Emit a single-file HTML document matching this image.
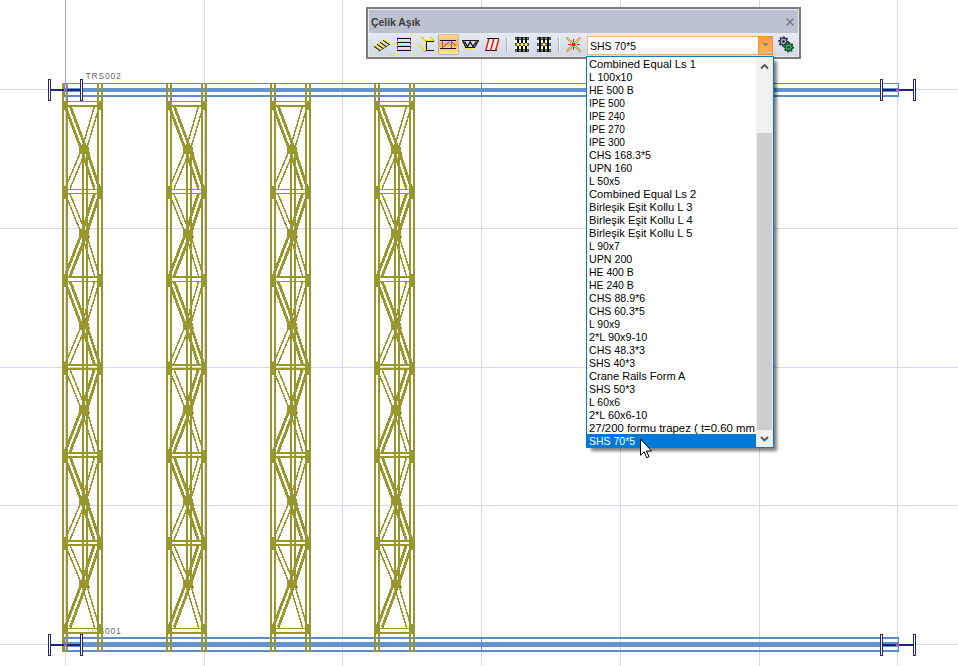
<!DOCTYPE html>
<html><head><meta charset="utf-8"><title>Çelik Aşık</title>
<style>
html,body{margin:0;padding:0;background:#fff;}
body{width:958px;height:666px;overflow:hidden;position:relative;font-family:"Liberation Sans",sans-serif;}
#cv{position:absolute;left:0;top:0;}
#cv text{font-family:"Liberation Sans",sans-serif;}
#panel{position:absolute;left:366px;top:7px;width:431px;height:48px;border:2px solid #7c7c7c;background:#bcc2cf;}
#panel .in{position:absolute;left:0;top:0;right:0;bottom:0;border:1px solid #e4e8f0;}
#title{position:absolute;left:0;top:0;right:0;height:23px;background:#bcc2cf;}
#title span{position:absolute;left:2px;top:6px;font-weight:bold;font-size:11px;color:#3c3c3c;white-space:nowrap;transform-origin:0 0;transform:scaleX(0.945);}
#tb{position:absolute;left:0;top:23px;right:0;bottom:0;background:linear-gradient(#e6eaf2,#d3d9e5);}
#sel{position:absolute;left:438px;top:34px;width:19px;height:19px;border:1px solid;border-color:#dcc09a #c9b493 #aab2bf #a4aebd;border-radius:2px;background:linear-gradient(#ffd898 0%,#ffb54c 45%,#ffb54c 55%,#ffe9a4 100%);}
.sep{position:absolute;top:38px;width:1px;height:13px;background:#a9afbb;border-right:1px solid #f4f6fa;}
#combo{position:absolute;left:587px;top:36px;width:184px;height:17px;border:1px solid #f7b673;background:#fff;}
#combo span{position:absolute;left:2.4px;top:3px;font-size:11px;color:#000;white-space:nowrap;transform-origin:0 0;transform:scaleX(0.9542);}
#cbtn{position:absolute;left:758px;top:36px;width:13px;height:17px;border:1px solid #f78f30;background:linear-gradient(#ff9a3c,#ffb466);}
#list{position:absolute;left:586px;top:56px;width:186px;height:390px;border:1px solid #0078d7;background:#fff;box-shadow:4px 4px 3px -1px rgba(0,0,0,.5);}
#items{position:absolute;left:0;top:0;width:169px;height:390px;overflow:hidden;}
#items div{height:13px;line-height:13px;font-size:11px;color:#000;white-space:nowrap;padding-left:2.4px;position:relative;}
#items div span{display:inline-block;transform-origin:0 0;position:relative;top:1px;}
#items div.sel{background:#0078d7;color:#fff;}
#sb{position:absolute;left:169px;top:0;width:17px;height:390px;background:#f0f0f0;}
#thumb{position:absolute;left:1px;top:76px;width:15px;height:297px;background:#cdcdcd;}
</style></head><body>
<svg id="cv" width="958" height="666" viewBox="0 0 958 666" shape-rendering="crispEdges">
<rect x="204" y="0" width="1" height="666" fill="#d6d6ec"/><rect x="342" y="0" width="1" height="666" fill="#d6d6ec"/><rect x="481" y="0" width="1" height="666" fill="#d6d6ec"/><rect x="620" y="0" width="1" height="666" fill="#d6d6ec"/><rect x="759" y="0" width="1" height="666" fill="#d6d6ec"/><rect x="897" y="0" width="1" height="666" fill="#d6d6ec"/><rect x="65" y="0" width="1" height="666" fill="#d6d6ec"/><rect x="65" y="0" width="1" height="83" fill="#ababab"/><rect x="916" y="644" width="42" height="1" fill="#a6a6a6"/><rect x="0" y="89" width="958" height="1" fill="#d6d6ec"/><rect x="0" y="228" width="958" height="1" fill="#d6d6ec"/><rect x="0" y="367" width="958" height="1" fill="#d6d6ec"/><rect x="0" y="505" width="958" height="1" fill="#d6d6ec"/><rect x="0" y="644" width="958" height="1" fill="#d6d6ec"/><rect x="64" y="83" width="835" height="1" fill="#5a8ccc"/><rect x="64" y="88" width="835" height="4" fill="#6494d0"/><rect x="64" y="95" width="835" height="2" fill="#5a8ccc"/><rect x="64" y="637" width="835" height="2" fill="#5a8ccc"/><rect x="64" y="642" width="835" height="5" fill="#6494d0"/><rect x="64" y="650" width="835" height="2" fill="#5a8ccc"/><rect x="898" y="83" width="1" height="14" fill="#5a8ccc"/><rect x="64" y="83" width="1" height="14" fill="#5a8ccc"/><rect x="481" y="83" width="1" height="14" fill="#5a8ccc"/><rect x="481" y="637" width="1" height="15" fill="#5a8ccc"/><rect x="64" y="637" width="1" height="15" fill="#5a8ccc"/><rect x="898" y="637" width="1" height="15" fill="#5a8ccc"/><text x="85.6" y="79" font-size="8.5" letter-spacing="0.8" fill="#666" style="shape-rendering:auto">TRS002</text><text x="85.6" y="634" font-size="8.5" letter-spacing="0.8" fill="#666">TRS001</text><rect x="85" y="626" width="12.5" height="10" fill="#fff" opacity="0.62"/><clipPath id="cc62"><rect x="62" y="100" width="41" height="540"/></clipPath><g fill="#97972e"><rect x="62" y="83" width="2" height="569"/><rect x="66" y="83" width="2" height="569"/><rect x="97" y="83" width="2" height="569"/><rect x="101" y="83" width="2" height="569"/><rect x="62" y="83" width="6" height="1"/><rect x="62" y="651" width="6" height="1"/><rect x="97" y="83" width="6" height="1"/><rect x="97" y="651" width="6" height="1"/><rect x="62" y="101" width="41" height="1"/><rect x="62" y="105" width="41" height="2"/><rect x="62" y="189" width="41" height="1"/><rect x="62" y="193" width="41" height="1"/><rect x="62" y="276" width="41" height="2"/><rect x="62" y="281" width="41" height="1"/><rect x="62" y="364" width="41" height="2"/><rect x="62" y="368" width="41" height="2"/><rect x="62" y="452" width="41" height="2"/><rect x="62" y="456" width="41" height="2"/><rect x="62" y="540" width="41" height="2"/><rect x="62" y="544" width="41" height="2"/><rect x="62" y="628" width="41" height="1"/><rect x="62" y="632" width="41" height="2"/><rect x="82" y="150" width="2" height="437"/><rect x="86" y="150" width="2" height="437"/><rect x="64" y="102" width="2" height="8"/><rect x="99" y="102" width="2" height="8"/><rect x="64" y="186" width="2" height="13"/><rect x="99" y="186" width="2" height="13"/><rect x="64" y="274" width="2" height="13"/><rect x="99" y="274" width="2" height="13"/><rect x="64" y="362" width="2" height="13"/><rect x="99" y="362" width="2" height="13"/><rect x="64" y="450" width="2" height="13"/><rect x="99" y="450" width="2" height="13"/><rect x="64" y="537" width="2" height="13"/><rect x="99" y="537" width="2" height="13"/><rect x="64" y="624" width="2" height="9"/><rect x="99" y="624" width="2" height="9"/><polygon points="78.5,145.2 88.0,145.2 89.0,149.7 90.0,153.7 79.5,153.7 79.0,149.7"/><polygon points="78.5,229.5 88.0,229.5 89.0,234.0 90.0,238.0 79.5,238.0 79.0,234.0"/><polygon points="78.5,320.8 88.0,320.8 89.0,325.3 90.0,329.3 79.5,329.3 79.0,325.3"/><polygon points="78.5,405.1 88.0,405.1 89.0,409.6 90.0,413.6 79.5,413.6 79.0,409.6"/><polygon points="78.5,496.4 88.0,496.4 89.0,500.9 90.0,504.9 79.5,504.9 79.0,500.9"/><polygon points="78.5,579.5 88.0,579.5 89.0,584.0 90.0,588.0 79.5,588.0 79.0,584.0"/><g stroke="#97972e" clip-path="url(#cc62)"><line x1="64.90" y1="105.80" x2="81.40" y2="149.70" stroke-width="2.8"/><line x1="70.10" y1="105.80" x2="86.60" y2="149.70" stroke-width="2.8"/><line x1="94.60" y1="105.80" x2="81.60" y2="149.70" stroke-width="1.5"/><line x1="99.40" y1="105.80" x2="86.40" y2="149.70" stroke-width="1.5"/><line x1="65.10" y1="188.60" x2="81.60" y2="149.70" stroke-width="1.5"/><line x1="69.90" y1="188.60" x2="86.40" y2="149.70" stroke-width="1.5"/><line x1="94.40" y1="188.60" x2="81.40" y2="149.70" stroke-width="2.8"/><line x1="99.60" y1="188.60" x2="86.60" y2="149.70" stroke-width="2.8"/><line x1="65.10" y1="193.60" x2="81.60" y2="234.00" stroke-width="1.5"/><line x1="69.90" y1="193.60" x2="86.40" y2="234.00" stroke-width="1.5"/><line x1="94.40" y1="193.60" x2="81.40" y2="234.00" stroke-width="2.8"/><line x1="99.60" y1="193.60" x2="86.60" y2="234.00" stroke-width="2.8"/><line x1="64.90" y1="276.40" x2="81.40" y2="234.00" stroke-width="2.8"/><line x1="70.10" y1="276.40" x2="86.60" y2="234.00" stroke-width="2.8"/><line x1="94.60" y1="276.40" x2="81.60" y2="234.00" stroke-width="1.5"/><line x1="99.40" y1="276.40" x2="86.40" y2="234.00" stroke-width="1.5"/><line x1="64.90" y1="281.40" x2="81.40" y2="325.30" stroke-width="2.8"/><line x1="70.10" y1="281.40" x2="86.60" y2="325.30" stroke-width="2.8"/><line x1="94.60" y1="281.40" x2="81.60" y2="325.30" stroke-width="1.5"/><line x1="99.40" y1="281.40" x2="86.40" y2="325.30" stroke-width="1.5"/><line x1="65.10" y1="364.20" x2="81.60" y2="325.30" stroke-width="1.5"/><line x1="69.90" y1="364.20" x2="86.40" y2="325.30" stroke-width="1.5"/><line x1="94.40" y1="364.20" x2="81.40" y2="325.30" stroke-width="2.8"/><line x1="99.60" y1="364.20" x2="86.60" y2="325.30" stroke-width="2.8"/><line x1="65.10" y1="369.20" x2="81.60" y2="409.60" stroke-width="1.5"/><line x1="69.90" y1="369.20" x2="86.40" y2="409.60" stroke-width="1.5"/><line x1="94.40" y1="369.20" x2="81.40" y2="409.60" stroke-width="2.8"/><line x1="99.60" y1="369.20" x2="86.60" y2="409.60" stroke-width="2.8"/><line x1="64.90" y1="452.00" x2="81.40" y2="409.60" stroke-width="2.8"/><line x1="70.10" y1="452.00" x2="86.60" y2="409.60" stroke-width="2.8"/><line x1="94.60" y1="452.00" x2="81.60" y2="409.60" stroke-width="1.5"/><line x1="99.40" y1="452.00" x2="86.40" y2="409.60" stroke-width="1.5"/><line x1="64.90" y1="457.00" x2="81.40" y2="500.90" stroke-width="2.8"/><line x1="70.10" y1="457.00" x2="86.60" y2="500.90" stroke-width="2.8"/><line x1="94.60" y1="457.00" x2="81.60" y2="500.90" stroke-width="1.5"/><line x1="99.40" y1="457.00" x2="86.40" y2="500.90" stroke-width="1.5"/><line x1="65.10" y1="539.80" x2="81.60" y2="500.90" stroke-width="1.5"/><line x1="69.90" y1="539.80" x2="86.40" y2="500.90" stroke-width="1.5"/><line x1="94.40" y1="539.80" x2="81.40" y2="500.90" stroke-width="2.8"/><line x1="99.60" y1="539.80" x2="86.60" y2="500.90" stroke-width="2.8"/><line x1="65.10" y1="544.80" x2="81.60" y2="584.00" stroke-width="1.5"/><line x1="69.90" y1="544.80" x2="86.40" y2="584.00" stroke-width="1.5"/><line x1="94.40" y1="544.80" x2="81.40" y2="584.00" stroke-width="2.8"/><line x1="99.60" y1="544.80" x2="86.60" y2="584.00" stroke-width="2.8"/><line x1="64.90" y1="627.60" x2="81.40" y2="584.00" stroke-width="2.8"/><line x1="70.10" y1="627.60" x2="86.60" y2="584.00" stroke-width="2.8"/><line x1="94.60" y1="627.60" x2="81.60" y2="584.00" stroke-width="1.5"/><line x1="99.40" y1="627.60" x2="86.40" y2="584.00" stroke-width="1.5"/></g></g><clipPath id="cc166"><rect x="166" y="100" width="41" height="540"/></clipPath><g fill="#97972e"><rect x="166" y="83" width="2" height="569"/><rect x="170" y="83" width="2" height="569"/><rect x="201" y="83" width="2" height="569"/><rect x="205" y="83" width="2" height="569"/><rect x="166" y="83" width="6" height="1"/><rect x="166" y="651" width="6" height="1"/><rect x="201" y="83" width="6" height="1"/><rect x="201" y="651" width="6" height="1"/><rect x="166" y="101" width="41" height="1"/><rect x="166" y="105" width="41" height="2"/><rect x="166" y="189" width="41" height="1"/><rect x="166" y="193" width="41" height="1"/><rect x="166" y="276" width="41" height="2"/><rect x="166" y="281" width="41" height="1"/><rect x="166" y="364" width="41" height="2"/><rect x="166" y="368" width="41" height="2"/><rect x="166" y="452" width="41" height="2"/><rect x="166" y="456" width="41" height="2"/><rect x="166" y="540" width="41" height="2"/><rect x="166" y="544" width="41" height="2"/><rect x="166" y="628" width="41" height="1"/><rect x="166" y="632" width="41" height="2"/><rect x="186" y="150" width="2" height="437"/><rect x="190" y="150" width="2" height="437"/><rect x="168" y="102" width="2" height="8"/><rect x="203" y="102" width="2" height="8"/><rect x="168" y="186" width="2" height="13"/><rect x="203" y="186" width="2" height="13"/><rect x="168" y="274" width="2" height="13"/><rect x="203" y="274" width="2" height="13"/><rect x="168" y="362" width="2" height="13"/><rect x="203" y="362" width="2" height="13"/><rect x="168" y="450" width="2" height="13"/><rect x="203" y="450" width="2" height="13"/><rect x="168" y="537" width="2" height="13"/><rect x="203" y="537" width="2" height="13"/><rect x="168" y="624" width="2" height="9"/><rect x="203" y="624" width="2" height="9"/><polygon points="182.5,145.2 192.0,145.2 193.0,149.7 194.0,153.7 183.5,153.7 183.0,149.7"/><polygon points="182.5,229.5 192.0,229.5 193.0,234.0 194.0,238.0 183.5,238.0 183.0,234.0"/><polygon points="182.5,320.8 192.0,320.8 193.0,325.3 194.0,329.3 183.5,329.3 183.0,325.3"/><polygon points="182.5,405.1 192.0,405.1 193.0,409.6 194.0,413.6 183.5,413.6 183.0,409.6"/><polygon points="182.5,496.4 192.0,496.4 193.0,500.9 194.0,504.9 183.5,504.9 183.0,500.9"/><polygon points="182.5,579.5 192.0,579.5 193.0,584.0 194.0,588.0 183.5,588.0 183.0,584.0"/><g stroke="#97972e" clip-path="url(#cc166)"><line x1="168.90" y1="105.80" x2="185.40" y2="149.70" stroke-width="2.8"/><line x1="174.10" y1="105.80" x2="190.60" y2="149.70" stroke-width="2.8"/><line x1="198.60" y1="105.80" x2="185.60" y2="149.70" stroke-width="1.5"/><line x1="203.40" y1="105.80" x2="190.40" y2="149.70" stroke-width="1.5"/><line x1="169.10" y1="188.60" x2="185.60" y2="149.70" stroke-width="1.5"/><line x1="173.90" y1="188.60" x2="190.40" y2="149.70" stroke-width="1.5"/><line x1="198.40" y1="188.60" x2="185.40" y2="149.70" stroke-width="2.8"/><line x1="203.60" y1="188.60" x2="190.60" y2="149.70" stroke-width="2.8"/><line x1="169.10" y1="193.60" x2="185.60" y2="234.00" stroke-width="1.5"/><line x1="173.90" y1="193.60" x2="190.40" y2="234.00" stroke-width="1.5"/><line x1="198.40" y1="193.60" x2="185.40" y2="234.00" stroke-width="2.8"/><line x1="203.60" y1="193.60" x2="190.60" y2="234.00" stroke-width="2.8"/><line x1="168.90" y1="276.40" x2="185.40" y2="234.00" stroke-width="2.8"/><line x1="174.10" y1="276.40" x2="190.60" y2="234.00" stroke-width="2.8"/><line x1="198.60" y1="276.40" x2="185.60" y2="234.00" stroke-width="1.5"/><line x1="203.40" y1="276.40" x2="190.40" y2="234.00" stroke-width="1.5"/><line x1="168.90" y1="281.40" x2="185.40" y2="325.30" stroke-width="2.8"/><line x1="174.10" y1="281.40" x2="190.60" y2="325.30" stroke-width="2.8"/><line x1="198.60" y1="281.40" x2="185.60" y2="325.30" stroke-width="1.5"/><line x1="203.40" y1="281.40" x2="190.40" y2="325.30" stroke-width="1.5"/><line x1="169.10" y1="364.20" x2="185.60" y2="325.30" stroke-width="1.5"/><line x1="173.90" y1="364.20" x2="190.40" y2="325.30" stroke-width="1.5"/><line x1="198.40" y1="364.20" x2="185.40" y2="325.30" stroke-width="2.8"/><line x1="203.60" y1="364.20" x2="190.60" y2="325.30" stroke-width="2.8"/><line x1="169.10" y1="369.20" x2="185.60" y2="409.60" stroke-width="1.5"/><line x1="173.90" y1="369.20" x2="190.40" y2="409.60" stroke-width="1.5"/><line x1="198.40" y1="369.20" x2="185.40" y2="409.60" stroke-width="2.8"/><line x1="203.60" y1="369.20" x2="190.60" y2="409.60" stroke-width="2.8"/><line x1="168.90" y1="452.00" x2="185.40" y2="409.60" stroke-width="2.8"/><line x1="174.10" y1="452.00" x2="190.60" y2="409.60" stroke-width="2.8"/><line x1="198.60" y1="452.00" x2="185.60" y2="409.60" stroke-width="1.5"/><line x1="203.40" y1="452.00" x2="190.40" y2="409.60" stroke-width="1.5"/><line x1="168.90" y1="457.00" x2="185.40" y2="500.90" stroke-width="2.8"/><line x1="174.10" y1="457.00" x2="190.60" y2="500.90" stroke-width="2.8"/><line x1="198.60" y1="457.00" x2="185.60" y2="500.90" stroke-width="1.5"/><line x1="203.40" y1="457.00" x2="190.40" y2="500.90" stroke-width="1.5"/><line x1="169.10" y1="539.80" x2="185.60" y2="500.90" stroke-width="1.5"/><line x1="173.90" y1="539.80" x2="190.40" y2="500.90" stroke-width="1.5"/><line x1="198.40" y1="539.80" x2="185.40" y2="500.90" stroke-width="2.8"/><line x1="203.60" y1="539.80" x2="190.60" y2="500.90" stroke-width="2.8"/><line x1="169.10" y1="544.80" x2="185.60" y2="584.00" stroke-width="1.5"/><line x1="173.90" y1="544.80" x2="190.40" y2="584.00" stroke-width="1.5"/><line x1="198.40" y1="544.80" x2="185.40" y2="584.00" stroke-width="2.8"/><line x1="203.60" y1="544.80" x2="190.60" y2="584.00" stroke-width="2.8"/><line x1="168.90" y1="627.60" x2="185.40" y2="584.00" stroke-width="2.8"/><line x1="174.10" y1="627.60" x2="190.60" y2="584.00" stroke-width="2.8"/><line x1="198.60" y1="627.60" x2="185.60" y2="584.00" stroke-width="1.5"/><line x1="203.40" y1="627.60" x2="190.40" y2="584.00" stroke-width="1.5"/></g></g><clipPath id="cc270"><rect x="270" y="100" width="41" height="540"/></clipPath><g fill="#97972e"><rect x="270" y="83" width="2" height="569"/><rect x="274" y="83" width="2" height="569"/><rect x="305" y="83" width="2" height="569"/><rect x="309" y="83" width="2" height="569"/><rect x="270" y="83" width="6" height="1"/><rect x="270" y="651" width="6" height="1"/><rect x="305" y="83" width="6" height="1"/><rect x="305" y="651" width="6" height="1"/><rect x="270" y="101" width="41" height="1"/><rect x="270" y="105" width="41" height="2"/><rect x="270" y="189" width="41" height="1"/><rect x="270" y="193" width="41" height="1"/><rect x="270" y="276" width="41" height="2"/><rect x="270" y="281" width="41" height="1"/><rect x="270" y="364" width="41" height="2"/><rect x="270" y="368" width="41" height="2"/><rect x="270" y="452" width="41" height="2"/><rect x="270" y="456" width="41" height="2"/><rect x="270" y="540" width="41" height="2"/><rect x="270" y="544" width="41" height="2"/><rect x="270" y="628" width="41" height="1"/><rect x="270" y="632" width="41" height="2"/><rect x="290" y="150" width="2" height="437"/><rect x="294" y="150" width="2" height="437"/><rect x="272" y="102" width="2" height="8"/><rect x="307" y="102" width="2" height="8"/><rect x="272" y="186" width="2" height="13"/><rect x="307" y="186" width="2" height="13"/><rect x="272" y="274" width="2" height="13"/><rect x="307" y="274" width="2" height="13"/><rect x="272" y="362" width="2" height="13"/><rect x="307" y="362" width="2" height="13"/><rect x="272" y="450" width="2" height="13"/><rect x="307" y="450" width="2" height="13"/><rect x="272" y="537" width="2" height="13"/><rect x="307" y="537" width="2" height="13"/><rect x="272" y="624" width="2" height="9"/><rect x="307" y="624" width="2" height="9"/><polygon points="286.5,145.2 296.0,145.2 297.0,149.7 298.0,153.7 287.5,153.7 287.0,149.7"/><polygon points="286.5,229.5 296.0,229.5 297.0,234.0 298.0,238.0 287.5,238.0 287.0,234.0"/><polygon points="286.5,320.8 296.0,320.8 297.0,325.3 298.0,329.3 287.5,329.3 287.0,325.3"/><polygon points="286.5,405.1 296.0,405.1 297.0,409.6 298.0,413.6 287.5,413.6 287.0,409.6"/><polygon points="286.5,496.4 296.0,496.4 297.0,500.9 298.0,504.9 287.5,504.9 287.0,500.9"/><polygon points="286.5,579.5 296.0,579.5 297.0,584.0 298.0,588.0 287.5,588.0 287.0,584.0"/><g stroke="#97972e" clip-path="url(#cc270)"><line x1="272.90" y1="105.80" x2="289.40" y2="149.70" stroke-width="2.8"/><line x1="278.10" y1="105.80" x2="294.60" y2="149.70" stroke-width="2.8"/><line x1="302.60" y1="105.80" x2="289.60" y2="149.70" stroke-width="1.5"/><line x1="307.40" y1="105.80" x2="294.40" y2="149.70" stroke-width="1.5"/><line x1="273.10" y1="188.60" x2="289.60" y2="149.70" stroke-width="1.5"/><line x1="277.90" y1="188.60" x2="294.40" y2="149.70" stroke-width="1.5"/><line x1="302.40" y1="188.60" x2="289.40" y2="149.70" stroke-width="2.8"/><line x1="307.60" y1="188.60" x2="294.60" y2="149.70" stroke-width="2.8"/><line x1="273.10" y1="193.60" x2="289.60" y2="234.00" stroke-width="1.5"/><line x1="277.90" y1="193.60" x2="294.40" y2="234.00" stroke-width="1.5"/><line x1="302.40" y1="193.60" x2="289.40" y2="234.00" stroke-width="2.8"/><line x1="307.60" y1="193.60" x2="294.60" y2="234.00" stroke-width="2.8"/><line x1="272.90" y1="276.40" x2="289.40" y2="234.00" stroke-width="2.8"/><line x1="278.10" y1="276.40" x2="294.60" y2="234.00" stroke-width="2.8"/><line x1="302.60" y1="276.40" x2="289.60" y2="234.00" stroke-width="1.5"/><line x1="307.40" y1="276.40" x2="294.40" y2="234.00" stroke-width="1.5"/><line x1="272.90" y1="281.40" x2="289.40" y2="325.30" stroke-width="2.8"/><line x1="278.10" y1="281.40" x2="294.60" y2="325.30" stroke-width="2.8"/><line x1="302.60" y1="281.40" x2="289.60" y2="325.30" stroke-width="1.5"/><line x1="307.40" y1="281.40" x2="294.40" y2="325.30" stroke-width="1.5"/><line x1="273.10" y1="364.20" x2="289.60" y2="325.30" stroke-width="1.5"/><line x1="277.90" y1="364.20" x2="294.40" y2="325.30" stroke-width="1.5"/><line x1="302.40" y1="364.20" x2="289.40" y2="325.30" stroke-width="2.8"/><line x1="307.60" y1="364.20" x2="294.60" y2="325.30" stroke-width="2.8"/><line x1="273.10" y1="369.20" x2="289.60" y2="409.60" stroke-width="1.5"/><line x1="277.90" y1="369.20" x2="294.40" y2="409.60" stroke-width="1.5"/><line x1="302.40" y1="369.20" x2="289.40" y2="409.60" stroke-width="2.8"/><line x1="307.60" y1="369.20" x2="294.60" y2="409.60" stroke-width="2.8"/><line x1="272.90" y1="452.00" x2="289.40" y2="409.60" stroke-width="2.8"/><line x1="278.10" y1="452.00" x2="294.60" y2="409.60" stroke-width="2.8"/><line x1="302.60" y1="452.00" x2="289.60" y2="409.60" stroke-width="1.5"/><line x1="307.40" y1="452.00" x2="294.40" y2="409.60" stroke-width="1.5"/><line x1="272.90" y1="457.00" x2="289.40" y2="500.90" stroke-width="2.8"/><line x1="278.10" y1="457.00" x2="294.60" y2="500.90" stroke-width="2.8"/><line x1="302.60" y1="457.00" x2="289.60" y2="500.90" stroke-width="1.5"/><line x1="307.40" y1="457.00" x2="294.40" y2="500.90" stroke-width="1.5"/><line x1="273.10" y1="539.80" x2="289.60" y2="500.90" stroke-width="1.5"/><line x1="277.90" y1="539.80" x2="294.40" y2="500.90" stroke-width="1.5"/><line x1="302.40" y1="539.80" x2="289.40" y2="500.90" stroke-width="2.8"/><line x1="307.60" y1="539.80" x2="294.60" y2="500.90" stroke-width="2.8"/><line x1="273.10" y1="544.80" x2="289.60" y2="584.00" stroke-width="1.5"/><line x1="277.90" y1="544.80" x2="294.40" y2="584.00" stroke-width="1.5"/><line x1="302.40" y1="544.80" x2="289.40" y2="584.00" stroke-width="2.8"/><line x1="307.60" y1="544.80" x2="294.60" y2="584.00" stroke-width="2.8"/><line x1="272.90" y1="627.60" x2="289.40" y2="584.00" stroke-width="2.8"/><line x1="278.10" y1="627.60" x2="294.60" y2="584.00" stroke-width="2.8"/><line x1="302.60" y1="627.60" x2="289.60" y2="584.00" stroke-width="1.5"/><line x1="307.40" y1="627.60" x2="294.40" y2="584.00" stroke-width="1.5"/></g></g><clipPath id="cc374"><rect x="374" y="100" width="41" height="540"/></clipPath><g fill="#97972e"><rect x="374" y="83" width="2" height="569"/><rect x="378" y="83" width="2" height="569"/><rect x="409" y="83" width="2" height="569"/><rect x="413" y="83" width="2" height="569"/><rect x="374" y="83" width="6" height="1"/><rect x="374" y="651" width="6" height="1"/><rect x="409" y="83" width="6" height="1"/><rect x="409" y="651" width="6" height="1"/><rect x="374" y="101" width="41" height="1"/><rect x="374" y="105" width="41" height="2"/><rect x="374" y="189" width="41" height="1"/><rect x="374" y="193" width="41" height="1"/><rect x="374" y="276" width="41" height="2"/><rect x="374" y="281" width="41" height="1"/><rect x="374" y="364" width="41" height="2"/><rect x="374" y="368" width="41" height="2"/><rect x="374" y="452" width="41" height="2"/><rect x="374" y="456" width="41" height="2"/><rect x="374" y="540" width="41" height="2"/><rect x="374" y="544" width="41" height="2"/><rect x="374" y="628" width="41" height="1"/><rect x="374" y="632" width="41" height="2"/><rect x="394" y="150" width="2" height="437"/><rect x="398" y="150" width="2" height="437"/><rect x="376" y="102" width="2" height="8"/><rect x="411" y="102" width="2" height="8"/><rect x="376" y="186" width="2" height="13"/><rect x="411" y="186" width="2" height="13"/><rect x="376" y="274" width="2" height="13"/><rect x="411" y="274" width="2" height="13"/><rect x="376" y="362" width="2" height="13"/><rect x="411" y="362" width="2" height="13"/><rect x="376" y="450" width="2" height="13"/><rect x="411" y="450" width="2" height="13"/><rect x="376" y="537" width="2" height="13"/><rect x="411" y="537" width="2" height="13"/><rect x="376" y="624" width="2" height="9"/><rect x="411" y="624" width="2" height="9"/><polygon points="390.5,145.2 400.0,145.2 401.0,149.7 402.0,153.7 391.5,153.7 391.0,149.7"/><polygon points="390.5,229.5 400.0,229.5 401.0,234.0 402.0,238.0 391.5,238.0 391.0,234.0"/><polygon points="390.5,320.8 400.0,320.8 401.0,325.3 402.0,329.3 391.5,329.3 391.0,325.3"/><polygon points="390.5,405.1 400.0,405.1 401.0,409.6 402.0,413.6 391.5,413.6 391.0,409.6"/><polygon points="390.5,496.4 400.0,496.4 401.0,500.9 402.0,504.9 391.5,504.9 391.0,500.9"/><polygon points="390.5,579.5 400.0,579.5 401.0,584.0 402.0,588.0 391.5,588.0 391.0,584.0"/><g stroke="#97972e" clip-path="url(#cc374)"><line x1="376.90" y1="105.80" x2="393.40" y2="149.70" stroke-width="2.8"/><line x1="382.10" y1="105.80" x2="398.60" y2="149.70" stroke-width="2.8"/><line x1="406.60" y1="105.80" x2="393.60" y2="149.70" stroke-width="1.5"/><line x1="411.40" y1="105.80" x2="398.40" y2="149.70" stroke-width="1.5"/><line x1="377.10" y1="188.60" x2="393.60" y2="149.70" stroke-width="1.5"/><line x1="381.90" y1="188.60" x2="398.40" y2="149.70" stroke-width="1.5"/><line x1="406.40" y1="188.60" x2="393.40" y2="149.70" stroke-width="2.8"/><line x1="411.60" y1="188.60" x2="398.60" y2="149.70" stroke-width="2.8"/><line x1="377.10" y1="193.60" x2="393.60" y2="234.00" stroke-width="1.5"/><line x1="381.90" y1="193.60" x2="398.40" y2="234.00" stroke-width="1.5"/><line x1="406.40" y1="193.60" x2="393.40" y2="234.00" stroke-width="2.8"/><line x1="411.60" y1="193.60" x2="398.60" y2="234.00" stroke-width="2.8"/><line x1="376.90" y1="276.40" x2="393.40" y2="234.00" stroke-width="2.8"/><line x1="382.10" y1="276.40" x2="398.60" y2="234.00" stroke-width="2.8"/><line x1="406.60" y1="276.40" x2="393.60" y2="234.00" stroke-width="1.5"/><line x1="411.40" y1="276.40" x2="398.40" y2="234.00" stroke-width="1.5"/><line x1="376.90" y1="281.40" x2="393.40" y2="325.30" stroke-width="2.8"/><line x1="382.10" y1="281.40" x2="398.60" y2="325.30" stroke-width="2.8"/><line x1="406.60" y1="281.40" x2="393.60" y2="325.30" stroke-width="1.5"/><line x1="411.40" y1="281.40" x2="398.40" y2="325.30" stroke-width="1.5"/><line x1="377.10" y1="364.20" x2="393.60" y2="325.30" stroke-width="1.5"/><line x1="381.90" y1="364.20" x2="398.40" y2="325.30" stroke-width="1.5"/><line x1="406.40" y1="364.20" x2="393.40" y2="325.30" stroke-width="2.8"/><line x1="411.60" y1="364.20" x2="398.60" y2="325.30" stroke-width="2.8"/><line x1="377.10" y1="369.20" x2="393.60" y2="409.60" stroke-width="1.5"/><line x1="381.90" y1="369.20" x2="398.40" y2="409.60" stroke-width="1.5"/><line x1="406.40" y1="369.20" x2="393.40" y2="409.60" stroke-width="2.8"/><line x1="411.60" y1="369.20" x2="398.60" y2="409.60" stroke-width="2.8"/><line x1="376.90" y1="452.00" x2="393.40" y2="409.60" stroke-width="2.8"/><line x1="382.10" y1="452.00" x2="398.60" y2="409.60" stroke-width="2.8"/><line x1="406.60" y1="452.00" x2="393.60" y2="409.60" stroke-width="1.5"/><line x1="411.40" y1="452.00" x2="398.40" y2="409.60" stroke-width="1.5"/><line x1="376.90" y1="457.00" x2="393.40" y2="500.90" stroke-width="2.8"/><line x1="382.10" y1="457.00" x2="398.60" y2="500.90" stroke-width="2.8"/><line x1="406.60" y1="457.00" x2="393.60" y2="500.90" stroke-width="1.5"/><line x1="411.40" y1="457.00" x2="398.40" y2="500.90" stroke-width="1.5"/><line x1="377.10" y1="539.80" x2="393.60" y2="500.90" stroke-width="1.5"/><line x1="381.90" y1="539.80" x2="398.40" y2="500.90" stroke-width="1.5"/><line x1="406.40" y1="539.80" x2="393.40" y2="500.90" stroke-width="2.8"/><line x1="411.60" y1="539.80" x2="398.60" y2="500.90" stroke-width="2.8"/><line x1="377.10" y1="544.80" x2="393.60" y2="584.00" stroke-width="1.5"/><line x1="381.90" y1="544.80" x2="398.40" y2="584.00" stroke-width="1.5"/><line x1="406.40" y1="544.80" x2="393.40" y2="584.00" stroke-width="2.8"/><line x1="411.60" y1="544.80" x2="398.60" y2="584.00" stroke-width="2.8"/><line x1="376.90" y1="627.60" x2="393.40" y2="584.00" stroke-width="2.8"/><line x1="382.10" y1="627.60" x2="398.60" y2="584.00" stroke-width="2.8"/><line x1="406.60" y1="627.60" x2="393.60" y2="584.00" stroke-width="1.5"/><line x1="411.40" y1="627.60" x2="398.40" y2="584.00" stroke-width="1.5"/></g></g><rect x="48.5" y="79.5" width="2" height="21" fill="#fff" stroke="#22227f" stroke-width="1"/><rect x="80.5" y="79.5" width="2" height="21" fill="#fff" stroke="#22227f" stroke-width="1"/><rect x="51" y="89" width="29" height="2" fill="#22227f"/><rect x="880.5" y="79.5" width="2" height="21" fill="#fff" stroke="#22227f" stroke-width="1"/><rect x="913.5" y="79.5" width="2" height="21" fill="#fff" stroke="#22227f" stroke-width="1"/><rect x="883" y="89" width="30" height="2" fill="#22227f"/><rect x="48.5" y="634.5" width="2" height="21" fill="#fff" stroke="#22227f" stroke-width="1"/><rect x="80.5" y="634.5" width="2" height="21" fill="#fff" stroke="#22227f" stroke-width="1"/><rect x="51" y="644" width="29" height="2" fill="#22227f"/><rect x="880.5" y="634.5" width="2" height="21" fill="#fff" stroke="#22227f" stroke-width="1"/><rect x="913.5" y="634.5" width="2" height="21" fill="#fff" stroke="#22227f" stroke-width="1"/><rect x="883" y="644" width="30" height="2" fill="#22227f"/><rect x="64.5" y="88.5" width="2" height="2" fill="#4a3a9c" stroke="#a862d6" stroke-width="1"/><rect x="896.5" y="88.5" width="2" height="2" fill="#4a3a9c" stroke="#a862d6" stroke-width="1"/><rect x="64.5" y="643.5" width="2" height="2" fill="#4a3a9c" stroke="#a862d6" stroke-width="1"/><rect x="896.5" y="643.5" width="2" height="2" fill="#4a3a9c" stroke="#a862d6" stroke-width="1"/>
</svg>
<div id="panel"><div class="in"><div id="title"><span>Çelik Aşık</span></div><div id="tb"></div></div></div>
<div id="sel"></div>
<div class="sep" style="left:506px"></div><div class="sep" style="left:558px"></div>
<div id="combo"><span>SHS 70*5</span></div><div id="cbtn"></div>
<div id="list"><div id="items"><div><span style="transform:scaleX(1.0172)">Combined Equal Ls 1</span></div><div><span style="transform:scaleX(0.9652)">L 100x10</span></div><div><span style="transform:scaleX(0.9492)">HE 500 B</span></div><div><span style="transform:scaleX(0.9198)">IPE 500</span></div><div><span style="transform:scaleX(0.9198)">IPE 240</span></div><div><span style="transform:scaleX(0.9198)">IPE 270</span></div><div><span style="transform:scaleX(0.9198)">IPE 300</span></div><div><span style="transform:scaleX(0.9655)">CHS 168.3*5</span></div><div><span style="transform:scaleX(0.9700)">UPN 160</span></div><div><span style="transform:scaleX(0.9502)">L 50x5</span></div><div><span style="transform:scaleX(1.0201)">Combined Equal Ls 2</span></div><div><span style="transform:scaleX(1.0106)">Birleşik Eşit Kollu L 3</span></div><div><span style="transform:scaleX(1.0136)">Birleşik Eşit Kollu L 4</span></div><div><span style="transform:scaleX(1.0106)">Birleşik Eşit Kollu L 5</span></div><div><span style="transform:scaleX(0.9410)">L 90x7</span></div><div><span style="transform:scaleX(0.9700)">UPN 200</span></div><div><span style="transform:scaleX(0.9492)">HE 400 B</span></div><div><span style="transform:scaleX(0.9492)">HE 240 B</span></div><div><span style="transform:scaleX(0.9674)">CHS 88.9*6</span></div><div><span style="transform:scaleX(0.9605)">CHS 60.3*5</span></div><div><span style="transform:scaleX(0.9502)">L 90x9</span></div><div><span style="transform:scaleX(0.9894)">2*L 90x9-10</span></div><div><span style="transform:scaleX(0.9622)">CHS 48.3*3</span></div><div><span style="transform:scaleX(0.9542)">SHS 40*3</span></div><div><span style="transform:scaleX(1.0054)">Crane Rails Form A</span></div><div><span style="transform:scaleX(0.9542)">SHS 50*3</span></div><div><span style="transform:scaleX(0.9502)">L 60x6</span></div><div><span style="transform:scaleX(0.9894)">2*L 60x6-10</span></div><div><span style="transform:scaleX(1.0343)">27/200 formu trapez ( t=0.60 mm</span></div><div class="sel"><span style="transform:scaleX(0.9542)">SHS 70*5</span></div></div><div id="sb"><div id="thumb"></div></div></div>
<svg id="ic" style="position:absolute;left:0;top:0" width="958" height="666" viewBox="0 0 958 666">
<line x1="378.5" y1="51.6" x2="390" y2="44" stroke="#7a7a7a" stroke-width="1.1"/><line x1="374.0" y1="46.3" x2="380.3" y2="50.5" stroke="#141414" stroke-width="1.15"/><line x1="374.5" y1="45.3" x2="380.90000000000003" y2="49.55" stroke="#ffe51e" stroke-width="1.25"/><line x1="377.09999999999997" y1="44.3" x2="383.4" y2="48.5" stroke="#141414" stroke-width="1.15"/><line x1="377.59999999999997" y1="43.3" x2="384.0" y2="47.55" stroke="#ffe51e" stroke-width="1.25"/><line x1="380.09999999999997" y1="42.3" x2="386.4" y2="46.5" stroke="#141414" stroke-width="1.15"/><line x1="380.59999999999997" y1="41.3" x2="387.0" y2="45.55" stroke="#ffe51e" stroke-width="1.25"/><line x1="383.09999999999997" y1="40.3" x2="389.4" y2="44.5" stroke="#141414" stroke-width="1.15"/><line x1="383.59999999999997" y1="39.3" x2="390.0" y2="43.55" stroke="#ffe51e" stroke-width="1.25"/><g shape-rendering="crispEdges"><rect x="397" y="37" width="1" height="14" fill="#555"/><rect x="410" y="37" width="1" height="14" fill="#555"/><rect x="397" y="37" width="14" height="1" fill="#ffe51e"/><rect x="397" y="38" width="14" height="1" fill="#141414"/><rect x="397" y="41" width="14" height="1" fill="#ffe51e"/><rect x="397" y="42" width="14" height="1" fill="#141414"/><rect x="397" y="45" width="14" height="1" fill="#ffe51e"/><rect x="397" y="46" width="14" height="1" fill="#141414"/><rect x="397" y="49" width="14" height="1" fill="#ffe51e"/><rect x="397" y="50" width="14" height="1" fill="#141414"/></g><g shape-rendering="crispEdges"><rect x="425" y="40" width="1" height="12" fill="#ffe51e"/><rect x="425" y="40" width="9" height="1" fill="#ffe51e"/><rect x="425" y="51" width="9" height="1" fill="#ffe51e"/><rect x="426" y="41" width="1" height="10" fill="#141414"/><rect x="426" y="41" width="8" height="1" fill="#141414"/><rect x="426" y="50" width="8" height="1" fill="#141414"/></g><path d="M421.9 37.3 L426 41 M434.2 41 L430.8 37.3 M425.8 52 L418.7 44.6" stroke="#141414" stroke-width="1" fill="none"/><path d="M421.2 37 L425.5 40.8 M434 40.6 L430.2 36.9 M425.4 51.6 L418 44.2" stroke="#ffe51e" stroke-width="1.2" fill="none"/><g shape-rendering="crispEdges"><rect x="440" y="40" width="16" height="1" fill="#141414"/><rect x="440" y="41" width="16" height="1" fill="#ffe51e"/><rect x="440" y="47" width="16" height="1" fill="#ffe51e"/><rect x="440" y="48" width="16" height="1" fill="#141414"/><rect x="442" y="41" width="1" height="7" fill="#666"/><rect x="451" y="41" width="1" height="7" fill="#666"/></g><path d="M443.5 46.8 L449.5 41.7 M451.5 41.5 L455.8 45.6" stroke="#555" stroke-width="0.9" fill="none"/><g shape-rendering="crispEdges"><rect x="463" y="41" width="14" height="1" fill="#ffe51e"/><rect x="466" y="48" width="9" height="1" fill="#ffe51e"/><rect x="462" y="40" width="17" height="1" fill="#141414"/><rect x="465" y="47" width="10" height="1" fill="#141414"/></g><path d="M462.5 40.5 L466 47.5 M478.5 40.5 L474.5 47.5 M464.5 41.5 L467.6 46.6 L470.2 41.8 L473 46.6 L476.3 41.5" stroke="#141414" stroke-width="1.3" fill="none"/><polygon points="488.5,38.5 498.8,38.5 496,50.5 485.5,50.5" fill="#f1f1f5"/><g shape-rendering="crispEdges"><rect x="487" y="38" width="12" height="1" fill="#141414"/><rect x="485" y="50" width="12" height="1" fill="#141414"/></g><path d="M485.7 50.5 L488.9 39 M490.6 50.5 L493.8 39 M495.6 50.5 L498.8 39" stroke="#f01c10" stroke-width="1.5" fill="none"/><g shape-rendering="crispEdges"><rect x="516" y="37" width="12" height="15" fill="#fdfdfd"/><rect x="515" y="37" width="14" height="3" fill="#4c4c4c"/><rect x="516" y="38" width="12" height="1" fill="#9a9a9a"/><rect x="515" y="43" width="14" height="3" fill="#4c4c4c"/><rect x="516" y="44" width="12" height="1" fill="#9a9a9a"/><rect x="515" y="49" width="14" height="3" fill="#4c4c4c"/><rect x="516" y="50" width="12" height="1" fill="#9a9a9a"/><rect x="517" y="37" width="2" height="15" fill="#0a120a"/><rect x="517" y="43" width="2" height="3" fill="#ffe51e"/><rect x="521" y="37" width="2" height="15" fill="#0a120a"/><rect x="521" y="43" width="2" height="3" fill="#ffe51e"/><rect x="525" y="37" width="2" height="15" fill="#0a120a"/><rect x="525" y="43" width="2" height="3" fill="#ffe51e"/></g><g shape-rendering="crispEdges"><rect x="538" y="37" width="12" height="15" fill="#fdfdfd"/><rect x="537" y="37" width="14" height="3" fill="#4c4c4c"/><rect x="538" y="38" width="12" height="1" fill="#9a9a9a"/><rect x="537" y="43" width="14" height="3" fill="#4c4c4c"/><rect x="538" y="44" width="12" height="1" fill="#9a9a9a"/><rect x="537" y="49" width="14" height="3" fill="#4c4c4c"/><rect x="538" y="50" width="12" height="1" fill="#9a9a9a"/><rect x="539" y="37" width="2" height="15" fill="#0a120a"/><rect x="543" y="37" width="2" height="15" fill="#0a120a"/><rect x="543" y="43" width="2" height="3" fill="#ffe51e"/><rect x="547" y="37" width="2" height="15" fill="#0a120a"/></g><path d="M566.5 37.5 L580.7 51.6 M580.7 37.5 L566.5 51.6" stroke="#777" stroke-width="2.2" fill="none"/><path d="M566.5 37.5 L580.7 51.6 M580.7 37.5 L566.5 51.6" stroke="#f5e03a" stroke-width="1.25" fill="none"/><g shape-rendering="crispEdges" fill="#ff1010"><rect x="568" y="44" width="3" height="1"/><rect x="577" y="44" width="3" height="1"/><rect x="573" y="39" width="1" height="3"/><rect x="573" y="47" width="1" height="3"/><rect x="572" y="43" width="3" height="3"/></g><polygon points="762.5,43 768.5,43 765.5,46.5" fill="#7f868f"/><path d="M786.5 18.5 L793.5 25.5 M793.5 18.5 L786.5 25.5" stroke="#757575" stroke-width="1.2" fill="none"/><polygon points="788.2,41.5 788.1,42.4 786.5,42.7 786.2,43.3 786.8,44.8 786.1,45.4 784.7,44.5 784.1,44.6 783.5,46.2 782.6,46.1 782.3,44.5 781.7,44.2 780.2,44.8 779.6,44.1 780.5,42.7 780.4,42.1 778.8,41.5 778.9,40.6 780.5,40.3 780.8,39.7 780.2,38.2 780.9,37.6 782.3,38.5 782.9,38.4 783.5,36.8 784.4,36.9 784.7,38.5 785.3,38.8 786.8,38.2 787.4,38.9 786.5,40.3 786.6,40.9" fill="#9fb0c4" stroke="#23233f" stroke-width="1.1"/><circle cx="783.5" cy="41.5" r="1.3" fill="#23233f"/><polygon points="793.4,47.2 793.3,48.1 791.7,48.4 791.4,49.0 792.0,50.5 791.3,51.1 789.9,50.2 789.3,50.3 788.7,51.9 787.8,51.8 787.5,50.2 786.9,49.9 785.4,50.5 784.8,49.8 785.7,48.4 785.6,47.8 784.0,47.2 784.1,46.3 785.7,46.0 786.0,45.4 785.4,43.9 786.1,43.3 787.5,44.2 788.1,44.1 788.7,42.5 789.6,42.6 789.9,44.2 790.5,44.5 792.0,43.9 792.6,44.6 791.7,46.0 791.8,46.6" fill="#35b565" stroke="#12401f" stroke-width="1.1"/><circle cx="788.7" cy="47.2" r="1.3" fill="#12401f"/><path d="M761 68.5 L764.5 65 L768 68.5" stroke="#505050" stroke-width="1.8" fill="none"/><path d="M761 437 L764.5 440.5 L768 437" stroke="#505050" stroke-width="1.8" fill="none"/><path d="M640.5 439 V455.3 L644.2 451.8 L646.7 457.7 L649 456.7 L646.5 451 H651.6 Z" fill="#fff" stroke="#000" stroke-width="1" stroke-linejoin="miter"/>
</svg>
</body></html>
